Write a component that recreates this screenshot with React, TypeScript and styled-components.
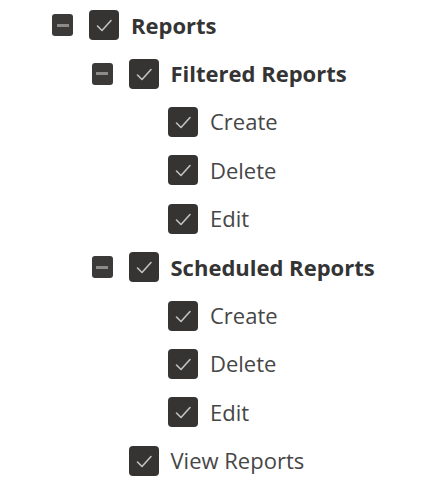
import React from 'react'
import styled, { createGlobalStyle } from 'styled-components'

const GlobalStyle = createGlobalStyle`
	html, body {
		margin: 0;
		padding: 0;
		background: #ffffff;
	}
	body {
		font-family: 'Open Sans', 'Liberation Sans', sans-serif;
	}
`

const INDENT = 39.5

type Node = {
	label: string
	children?: Node[]
}

const tree: Node = {
	label: 'Reports',
	children: [
		{ label: 'Filtered Reports', children: [{ label: 'Create' }, { label: 'Delete' }, { label: 'Edit' }] },
		{ label: 'Scheduled Reports', children: [{ label: 'Create' }, { label: 'Delete' }, { label: 'Edit' }] },
		{ label: 'View Reports' },
	],
}

const TreeList = styled.ul`
	list-style: none;
	margin: 0;
	padding: 1px 0 0 52px;
`

const SubList = styled.ul`
	list-style: none;
	margin: 0;
	padding: 0 0 0 ${INDENT}px;
`

const Row = styled.div`
	display: flex;
	align-items: center;
	height: 48.4px;
`

const Toggle = styled.span<{ $hidden?: boolean }>`
	box-sizing: border-box;
	width: 21px;
	height: 22px;
	margin-right: 16px;
	border-radius: 3px;
	background: ${p => (p.$hidden ? 'transparent' : '#3b3a39')};
	display: flex;
	align-items: center;
	justify-content: center;
	flex: none;

	&::after {
		content: '';
		display: ${p => (p.$hidden ? 'none' : 'block')};
		width: 12px;
		height: 3px;
		background: #8c8b89;
	}
`

const Box = styled.span`
	width: 30px;
	height: 30px;
	border-radius: 4px;
	background: #363433;
	display: flex;
	align-items: center;
	justify-content: center;
	flex: none;
	margin-right: 12px;
`

const Label = styled.span<{ $bold?: boolean }>`
	font-size: 22px;
	font-weight: ${p => (p.$bold ? 700 : 400)};
	color: ${p => (p.$bold ? '#343434' : '#464646')};
	white-space: nowrap;
	line-height: 1;
	margin-top: -1px;
`

function CheckMark() {
	return (
		<svg width="30" height="30" viewBox="0 0 30 30">
			<polyline points="8.5,16 13,20.5 22,10.5" fill="none" stroke="#c4c2c0" strokeWidth="1.6" strokeLinecap="round" strokeLinejoin="round" />
		</svg>
	)
}

function TreeItem({ node }: { node: Node }) {
	const hasKids = !!node.children?.length
	return (
		<li>
			<Row>
				<Toggle $hidden={!hasKids} />
				<Box>
					<CheckMark />
				</Box>
				<Label $bold={hasKids}>{node.label}</Label>
			</Row>
			{hasKids && (
				<SubList>
					{node.children!.map((c, i) => (
						<TreeItem key={i} node={c} />
					))}
				</SubList>
			)}
		</li>
	)
}

export default function App() {
	return (
		<>
			<GlobalStyle />
			<TreeList>
				<TreeItem node={tree} />
			</TreeList>
		</>
	)
}
